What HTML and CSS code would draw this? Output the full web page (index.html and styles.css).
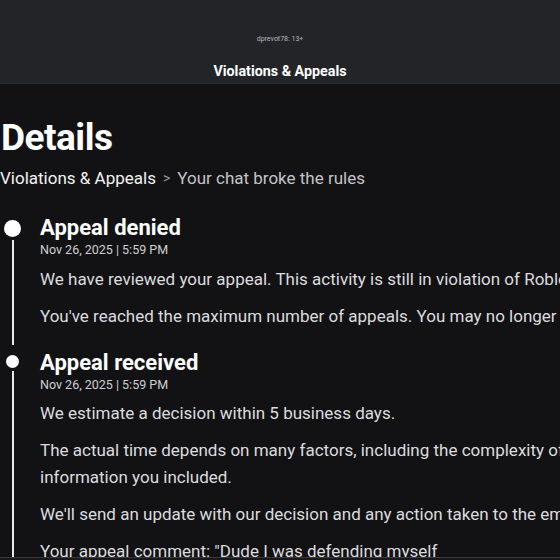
FILE: index.html
```html
<!DOCTYPE html>
<html lang="en">
<head>
<meta charset="utf-8">
<title>Violations &amp; Appeals</title>
<link rel="stylesheet" href="styles.css">
</head>
<body>
<header class="topbar">
  <div class="user">dprevot78: 13+</div>
  <div class="bar-title">Violations &amp; Appeals</div>
</header>
<main class="page">
  <h1 class="title">Details</h1>
  <nav class="crumbs">
    <span class="crumb-link">Violations &amp; Appeals</span>
    <span class="crumb-sep">&gt;</span>
    <span class="crumb-current">Your chat broke the rules</span>
  </nav>
  <ol class="timeline">
    <li class="event">
      <div class="rail"><span class="dot dot-big"></span><span class="line"></span></div>
      <div class="event-body">
        <h2 class="event-title">Appeal denied</h2>
        <div class="event-date">Nov 26, 2025 | 5:59 PM</div>
        <p class="event-text">We have reviewed your appeal. This activity is still in violation of Roblox Community Standards.</p>
        <p class="event-text">You've reached the maximum number of appeals. You may no longer appeal this decision.</p>
      </div>
    </li>
    <li class="event">
      <div class="rail"><span class="dot"></span><span class="line"></span></div>
      <div class="event-body">
        <h2 class="event-title">Appeal received</h2>
        <div class="event-date">Nov 26, 2025 | 5:59 PM</div>
        <p class="event-text">We estimate a decision within 5 business days.</p>
        <p class="event-text narrow">The actual time depends on many factors, including the complexity of your appeal and the information you included.</p>
        <p class="event-text">We'll send an update with our decision and any action taken to the email associated with your account.</p>
        <p class="event-text">Your appeal comment: "Dude I was defending myself</p>
      </div>
    </li>
  </ol>
</main>
<div class="bottom-edge"></div>
</body>
</html>
```
FILE: styles.css
```css
html, body {
  margin: 0;
  padding: 0;
  background: #121215;
  overflow: hidden;
  height: 560px;
}
body {
  font-family: Roboto, "Liberation Sans", sans-serif;
  color: #fff;
}
.topbar {
  height: 84px;
  background: #232428;
  border-bottom: 1px solid #2c2d31;
  display: flex;
  flex-direction: column;
  align-items: center;
  box-sizing: border-box;
  padding-top: 35px;
}
.user {
  font-size: 7px;
  color: #b8b9bc;
  line-height: 9px;
}
.bar-title {
  margin-top: 18px;
  font-size: 14.3px;
  font-weight: 700;
  line-height: 18px;
}
.page {
  width: 1100px;
  padding-top: 30px;
}
.title {
  margin: 0;
  padding-left: 1px;
  font-size: 37px;
  font-weight: 700;
  line-height: 48px;
  letter-spacing: -0.5px;
}
.crumbs {
  margin-top: 4px;
  display: flex;
  align-items: center;
  gap: 7px;
  font-size: 17px;
  line-height: 24px;
}
.crumb-link { color: #f2f2f2; }
.crumb-sep { color: #9a9a9d; font-size: 14px; }
.crumb-current { color: #c4c4c7; }
.timeline {
  list-style: none;
  margin: 24px 0 0;
  padding: 0;
}
.event {
  display: flex;
}
.rail {
  width: 25px;
  flex: none;
  display: flex;
  flex-direction: column;
  align-items: center;
  padding-top: 6px;
}
.dot {
  width: 13px;
  height: 13px;
  border-radius: 50%;
  background: #fff;
  flex: none;
}
.dot-big {
  width: 17px;
  height: 17px;
}
.line {
  flex: 1;
  width: 2px;
  background: #e8e8e8;
  margin: 3px 0 4px;
}
.event-body {
  margin-left: 15px;
  flex: 1;
  padding-bottom: 19px;
}
.event-title {
  margin: 0;
  font-size: 22px;
  font-weight: 700;
  line-height: 28px;
}
.event-date {
  font-size: 12.5px;
  color: #cfcfd2;
  line-height: 16px;
}
.event-text {
  margin: 10px 0 0;
  font-size: 17px;
  line-height: 27px;
  color: #dcdcdf;
}
.event-date + .event-text {
  margin-top: 8px;
}
.event + .event .event-date + .event-text {
  margin-top: 7px;
}
.narrow {
  max-width: 730px;
}
.bottom-edge {
  position: fixed;
  left: 0;
  right: 0;
  top: 557px;
  height: 3px;
  background: #18181b;
  border-top: 1px solid #3a3a3e;
}
```
